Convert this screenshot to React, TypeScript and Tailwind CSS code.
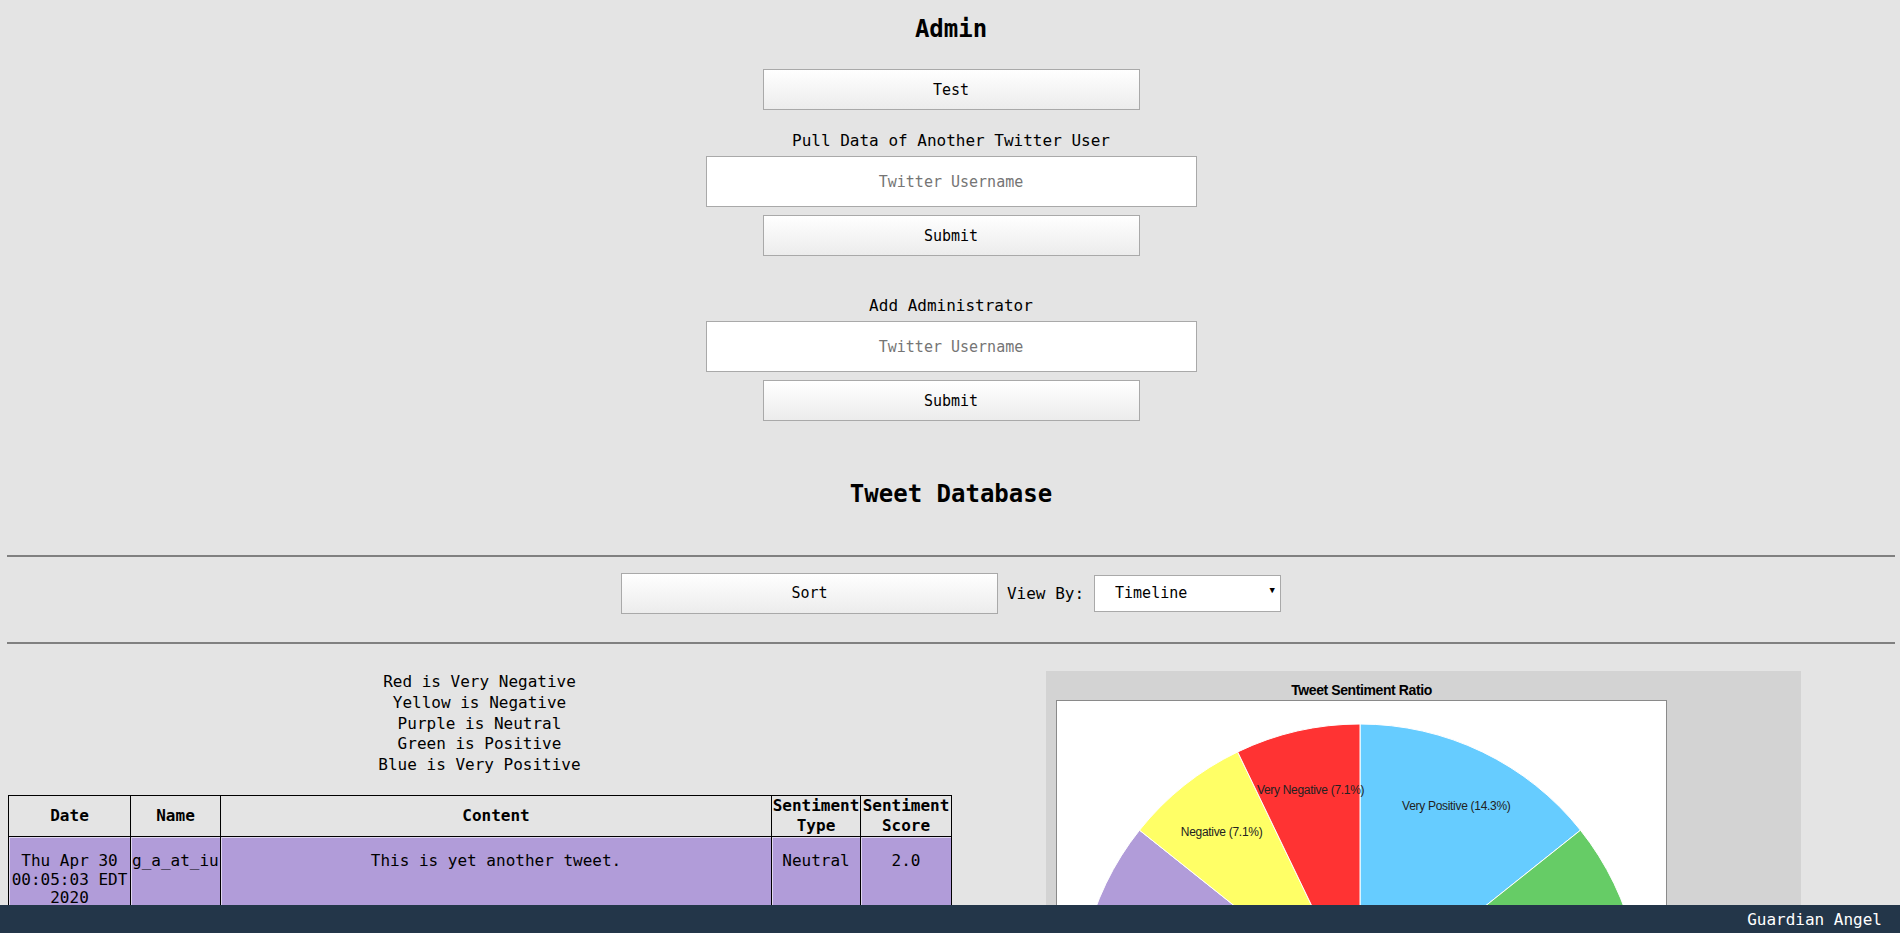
import React from 'react';

const slices = [
  { name: 'Very Positive', color: '#66ccff', frac: 2 / 14 },
  { name: 'Positive', color: '#66cc66', frac: 2 / 14 },
  { name: 'Neutral', color: '#b19cd9', frac: 8 / 14 },
  { name: 'Negative', color: '#ffff66', frac: 1 / 14 },
  { name: 'Very Negative', color: '#ff3333', frac: 1 / 14 },
];

const tweets = [
  {
    date: 'Thu Apr 30 00:05:03 EDT 2020',
    name: 'g_a_at_iu',
    content: 'This is yet another tweet.',
    type: 'Neutral',
    score: '2.0',
    color: 'bg-[#b19cd9]',
  },
  {
    date: 'Wed Apr 29 23:58:41 EDT 2020',
    name: 'g_a_at_iu',
    content: 'I love this project so much!',
    type: 'Very Positive',
    score: '4.0',
    color: 'bg-[#66ccff]',
  },
  {
    date: 'Wed Apr 29 23:51:12 EDT 2020',
    name: 'g_a_at_iu',
    content: 'This is a tweet.',
    type: 'Neutral',
    score: '2.0',
    color: 'bg-[#b19cd9]',
  },
];

function Button({ children, className = '' }: { children: React.ReactNode; className?: string }) {
  return (
    <button
      className={`w-[377px] h-[41px] border border-[#a9a9a9] bg-gradient-to-b from-white to-[#ececec] text-[15px] text-black ${className}`}
    >
      {children}
    </button>
  );
}

function UsernameInput({ className = '' }: { className?: string }) {
  return (
    <input
      placeholder="Twitter Username"
      className={`w-[491px] h-[51px] border border-[#a9a9a9] bg-white text-center text-[15px] placeholder:text-[#757575] outline-none ${className}`}
    />
  );
}

function PieChart() {
  const cx = 303;
  const cy = 305;
  const r = 282;
  let start = 0;
  const pt = (a: number, rad: number) => [cx + rad * Math.sin(a), cy - rad * Math.cos(a)];

  return (
    <svg width="609" height="612" className="block">
      {slices.map((s) => {
        const a0 = start * Math.PI * 2;
        const a1 = (start + s.frac) * Math.PI * 2;
        start += s.frac;
        const [x0, y0] = pt(a0, r);
        const [x1, y1] = pt(a1, r);
        const large = s.frac > 0.5 ? 1 : 0;
        const [lx, ly] = pt((a0 + a1) / 2, 222);
        return (
          <g key={s.name}>
            <path
              d={`M${cx},${cy} L${x0},${y0} A${r},${r} 0 ${large} 1 ${x1},${y1} Z`}
              fill={s.color}
              stroke="#ffffff"
              strokeWidth="1"
            />
            <text
              x={lx}
              y={ly}
              textAnchor="middle"
              dominantBaseline="central"
              fontSize="12"
              letterSpacing="-0.3"
              fontFamily="'Liberation Sans', Arial, sans-serif"
              fill="#222"
            >
              {s.name} ({(s.frac * 100).toFixed(1)}%)
            </text>
          </g>
        );
      })}
    </svg>
  );
}

export default function App() {
  return (
    <div className="min-h-screen bg-[#e4e4e4] pl-[7px] pr-[5px] pb-[80px] font-['DejaVu_Sans_Mono','Liberation_Mono',monospace] text-black">
      <section className="flex flex-col items-center">
        <h2 className="mt-[15px] text-[24px] leading-[28px] font-bold">Admin</h2>
        <Button className="mt-[26px] pt-[1px]">Test</Button>
        <p className="mt-[21px] text-[16px] leading-[19px]">Pull Data of Another Twitter User</p>
        <UsernameInput className="mt-[6px]" />
        <Button className="mt-[8px] pt-[1px]">Submit</Button>
        <p className="mt-[40px] text-[16px] leading-[19px]">Add Administrator</p>
        <UsernameInput className="mt-[6px]" />
        <Button className="mt-[8px] pt-[1px]">Submit</Button>
        <h2 className="mt-[59px] text-[24px] leading-[28px] font-bold">Tweet Database</h2>
      </section>

      <hr className="mt-[47px] border-0 h-[2px] bg-[#808080]" />

      <div className="mt-[16px] flex items-center justify-center">
        <Button className="h-[40px]">Sort</Button>
        <span className="ml-[9px] text-[16px]">View By:</span>
        <div className="relative ml-[10px]">
          <select className="appearance-none w-[187px] h-[37px] border border-[#a9a9a9] bg-white pl-[20px] text-[15px] outline-none">
            <option>Timeline</option>
            <option>Sentiment</option>
          </select>
          <span className="pointer-events-none absolute right-[6px] top-[11px] text-[9px] leading-none">▼</span>
        </div>
      </div>

      <hr className="mt-[28px] border-0 h-[2px] bg-[#808080]" />

      <div className="flex items-start">
        <div className="w-[944px] pl-[1px]">
          <div className="mt-[28px] text-center text-[16px] leading-[20.8px]">
            <div>Red is Very Negative</div>
            <div>Yellow is Negative</div>
            <div>Purple is Neutral</div>
            <div>Green is Positive</div>
            <div>Blue is Very Positive</div>
          </div>
          <table className="mt-[19px] w-[943px] table-fixed border-collapse border border-black text-[16px]">
            <colgroup>
              <col className="w-[122px]" />
              <col className="w-[90px]" />
              <col className="w-[551px]" />
              <col className="w-[89px]" />
              <col className="w-[91px]" />
            </colgroup>
            <thead>
              <tr className="leading-[20px]">
                <th className="border border-black p-0 font-bold">Date</th>
                <th className="border border-black p-0 font-bold">Name</th>
                <th className="border border-black p-0 font-bold">Content</th>
                <th className="border border-black p-0 font-bold">Sentiment Type</th>
                <th className="border border-black p-0 font-bold">Sentiment Score</th>
              </tr>
            </thead>
            <tbody>
              {tweets.map((t, i) => (
                <tr key={i} className={`${t.color} align-top leading-[18.6px]`}>
                  <td className="border border-black shadow-[inset_1px_1px_0_rgba(255,255,255,0.6)] px-[1px] pt-[15px] pb-[16px] text-center">
                    {t.date}
                  </td>
                  <td className="border border-black shadow-[inset_1px_1px_0_rgba(255,255,255,0.6)] px-[1px] pt-[15px] pb-[16px] text-left">
                    {t.name}
                  </td>
                  <td className="border border-black shadow-[inset_1px_1px_0_rgba(255,255,255,0.6)] px-[1px] pt-[15px] pb-[16px] text-center">
                    {t.content}
                  </td>
                  <td className="border border-black shadow-[inset_1px_1px_0_rgba(255,255,255,0.6)] px-[1px] pt-[15px] pb-[16px] text-center">
                    {t.type}
                  </td>
                  <td className="border border-black shadow-[inset_1px_1px_0_rgba(255,255,255,0.6)] px-[1px] pt-[15px] pb-[16px] text-center">
                    {t.score}
                  </td>
                </tr>
              ))}
            </tbody>
          </table>
        </div>

        <div className="ml-[95px] mt-[27px] w-[755px] bg-[#d3d3d3] pb-[40px]">
          <div className="w-[611px] ml-[10px]">
            <div className="pt-[11px] h-[29px] text-center text-[14px] leading-[16px] font-bold tracking-[-0.4px] font-['Liberation_Sans',Arial,sans-serif]">
              Tweet Sentiment Ratio
            </div>
            <div className="border border-[#8a8a8a] bg-white">
              <PieChart />
            </div>
          </div>
        </div>
      </div>

      <footer className="fixed bottom-0 left-0 right-0 h-[28px] bg-[#233649] pr-[18px] text-right text-[16px] leading-[30px] text-white">
        Guardian Angel
      </footer>
    </div>
  );
}
